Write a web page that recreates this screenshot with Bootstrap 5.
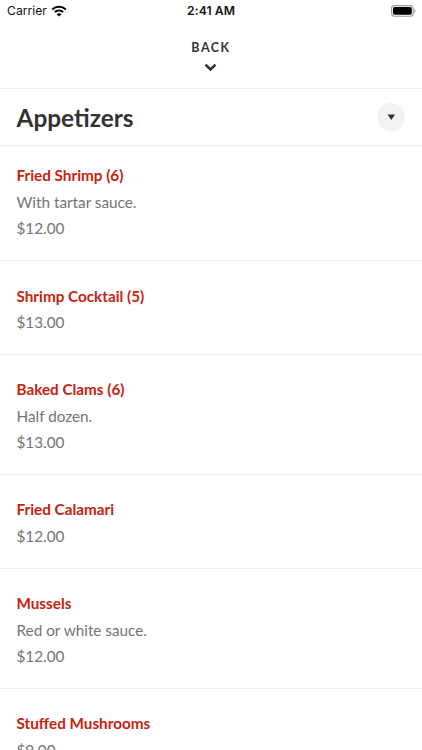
<!DOCTYPE html>
<html lang="en"><head><meta charset="utf-8"><meta name="viewport" content="width=device-width, initial-scale=1"><title>Appetizers</title>
<link href="https://cdn.jsdelivr.net/npm/bootstrap@5.3.0/dist/css/bootstrap.min.css" rel="stylesheet">
<style>
html,body{height:750px;overflow:hidden}
body{font-family:Lato,sans-serif;color:#747474;background:#fff}
.status{height:22px;font:12.2px/22px Inter,sans-serif;color:#111;padding:0 6px 0 7px}
.status>*{flex:1 1 0}
.status svg{display:block}
.clock{font-weight:600;font-size:12.2px;letter-spacing:.05px;padding-right:1px}
.back{height:67px;border-bottom:1px solid #eee;color:#333;padding-top:18px}
.back-label{font-size:12.5px;line-height:15px;font-weight:700;letter-spacing:1.5px}
.back svg{display:block;margin:8px auto 0;transform:translateX(-1px)}
.section-head{height:57px;border-bottom:1px solid #eee;padding:0 17px 0 16.5px}
.section-head h1{font-size:24.4px;line-height:30px;padding-top:1px;font-weight:700;color:#333}
.toggle{width:28px;height:28px;background:#f2f2f2}
.dish{padding:16.4px 16.5px 18.4px;border-bottom:1px solid #eee;font-size:15.3px;line-height:26.5px}
.dish+.dish{padding-top:21.3px}
.dish h2{font-size:15.25px;line-height:26.5px;font-weight:700;color:#c9210e}
</style></head><body>
<header class="status d-flex align-items-center">
<div class="d-flex align-items-center gap-1"><span>Carrier</span>
<svg width="16" height="12" viewBox="0 0 16 12" fill="none" stroke="#000" stroke-width="2.1"><path d="M1.2 4.4C5 .8 11 .8 14.8 4.4M3.8 7.1C6.2 4.9 9.8 4.9 12.2 7.1"/><path d="M8 11.6 5.6 9.2Q8 7.3 10.4 9.2Z" fill="#000" stroke="none"/></svg></div>
<span class="clock text-center">2:41 AM</span>
<div class="d-flex justify-content-end"><svg width="25" height="12" viewBox="0 0 25 12"><rect x=".6" y=".6" width="21.6" height="10.6" rx="3" fill="#fff" stroke="#999" stroke-width="1.1"/><rect x="2" y="2" width="18.8" height="7.8" rx="1.7" fill="#000"/><path d="M23.4 4v4q1.2-.5 1.2-2T23.4 4Z" fill="#999"/></svg></div>
</header>
<div class="back text-center"><div class="back-label">BACK</div><svg width="13" height="9" viewBox="0 0 13 9" fill="none" stroke="#333" stroke-width="2.7"><path d="M1.5 1.6 6.5 6.4 11.5 1.6"/></svg></div>
<div class="section-head d-flex align-items-center justify-content-between"><h1 class="m-0">Appetizers</h1><div class="toggle rounded-circle d-flex align-items-center justify-content-center"><svg width="8" height="6" viewBox="0 0 8 6"><path d="M.6.6H8L4.3 6Z" fill="#333"/></svg></div></div>
<main>
<article class="dish"><h2 class="m-0">Fried Shrimp (6)</h2><div>With tartar sauce.</div><div>$12.00</div></article>
<article class="dish"><h2 class="m-0">Shrimp Cocktail (5)</h2><div>$13.00</div></article>
<article class="dish"><h2 class="m-0">Baked Clams (6)</h2><div>Half dozen.</div><div>$13.00</div></article>
<article class="dish"><h2 class="m-0">Fried Calamari</h2><div>$12.00</div></article>
<article class="dish"><h2 class="m-0">Mussels</h2><div>Red or white sauce.</div><div>$12.00</div></article>
<article class="dish"><h2 class="m-0">Stuffed Mushrooms</h2><div>$9.00</div></article>
</main>
<script src="https://cdn.jsdelivr.net/npm/bootstrap@5.3.0/dist/js/bootstrap.bundle.min.js"></script>
</body></html>
